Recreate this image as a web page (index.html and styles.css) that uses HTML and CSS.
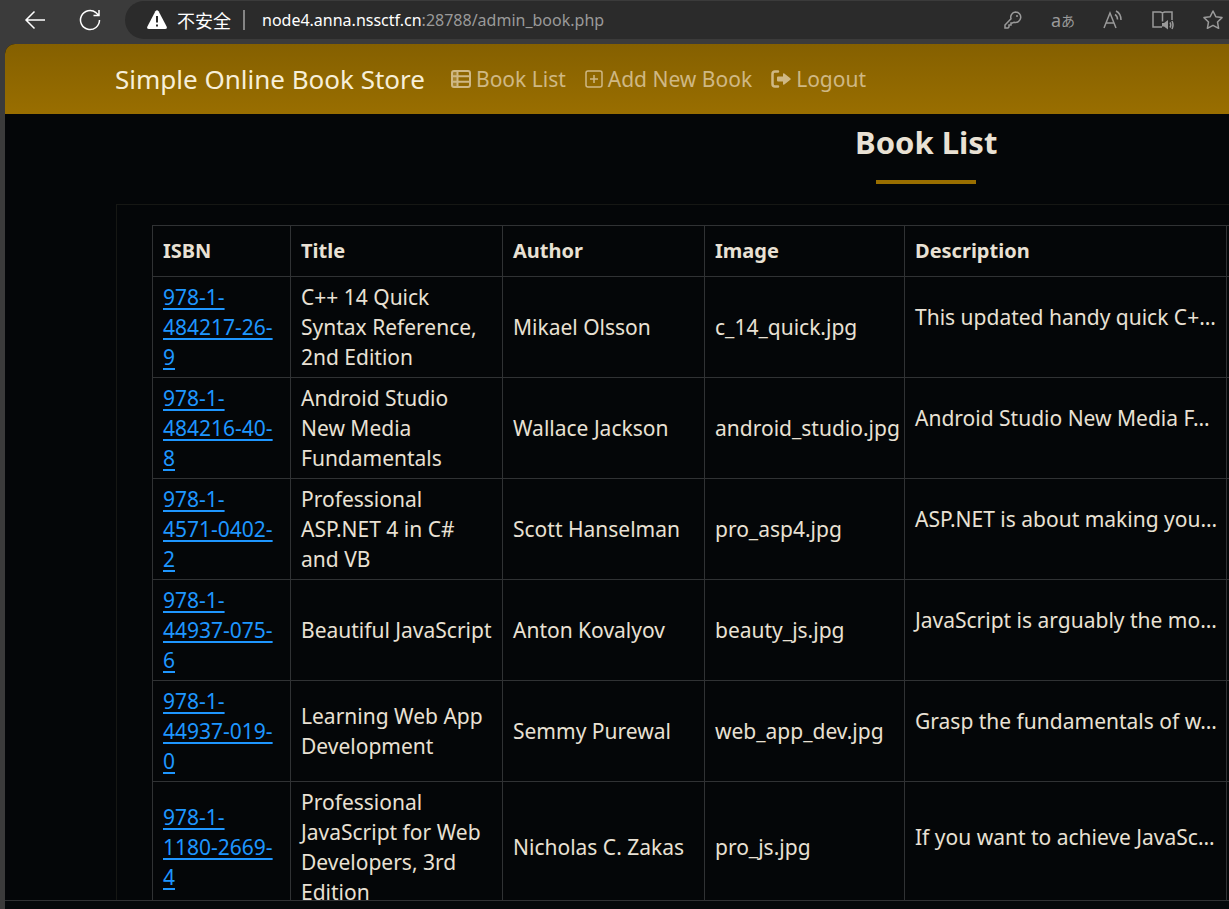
FILE: index.html
```
<!DOCTYPE html>
<html lang="en">
<head>
<meta charset="utf-8">
<title>Book List</title>
<link rel="stylesheet" href="styles.css">
</head>
<body>
<header class="toolbar">
  <button class="tool" aria-label="Back"><svg width="22" height="20" viewBox="0 0 22 20"><path d="M21 10H2M10.500 1.500L2 10l8.500 8.500"/></svg></button>
  <button class="tool" aria-label="Refresh"><svg width="22" height="22" viewBox="0 0 22 22"><path d="M20.500 11a9.500 9.500 0 1 1-3.500-7.300L19.500 6M20 1v5.500h-5.500"/></svg></button>
  <div class="address">
    <svg class="warning" width="22" height="20" viewBox="0 0 22 20"><path d="M9.400 1.200q1.600-2 3.200 0l8 15.300q1 2.500-1.600 2.500H3q-2.600 0-1.600-2.500z" fill="#fff"/><path d="M11 6v6.500M11 14.500v2" stroke="#2b2b2b" stroke-width="2"/></svg>
    <span class="security" lang="zh">不安全</span>
    <span class="divider"></span>
    <span class="url">node4.anna.nssctf.cn<span class="path">:28788/admin_book.php</span></span>
    <div class="actions">
      <button class="action" aria-label="Passwords"><svg width="18" height="18" viewBox="0 0 18 18"><path d="M11.500 1a5.200 5.200 0 1 1-1.400 10.200L8.500 12H7v2H5v2l-1 1H1v-3l6-6.200A5.200 5.200 0 0 1 11.500 1z"/><circle cx="13" cy="5" r="1" fill="#9a9a9a" stroke="none"/></svg></button>
      <button class="action translate" aria-label="Translate">a<span class="kana">あ</span></button>
      <button class="action" aria-label="Read aloud"><svg width="20" height="20" viewBox="0 0 20 20"><path d="M1 18L7 3l6 15M3.200 13h7.600M12 4.500q2.500 1.500 2.500 5M13 1q5 2.500 5 9"/></svg></button>
      <button class="action" aria-label="Immersive reader"><svg width="22" height="20" viewBox="0 0 22 20"><path d="M10 17H1V2h7.500l2 1 2-1H20v8M10.500 3v8.500M18 12.500q1.500 2.500 0 5M20 11q2 4 0 8"/><path d="M10 13h2l4-3v9.500l-4-3h-2z" fill="#9a9a9a" stroke="none"/></svg></button>
      <button class="action" aria-label="Add to favorites"><svg width="20" height="20" viewBox="0 0 20 20"><path d="M10 1l2.800 5.700 6.200.9-4.500 4.400 1.100 6.300L10 15.300l-5.600 3 1.100-6.300L1 7.600l6.200-.9z" stroke-linejoin="round"/></svg></button>
    </div>
  </div>
</header>
<div class="page">
  <nav class="navbar">
    <a class="brand" href="#">Simple Online Book Store</a>
    <a class="nav-link" href="#"><svg width="20" height="18" viewBox="0 0 20 18"><rect x="1" y="1" width="18" height="16" rx="2" class="thick"/><path d="M1 6.300h18M1 11.700h18M6.500 1v16" class="thick"/><path d="M1 2h5v14H1z" fill="currentColor" fill-opacity=".35" stroke="none"/></svg>Book List</a>
    <a class="nav-link" href="#"><svg width="18" height="18" viewBox="0 0 18 18"><rect x="1" y="1" width="16" height="16" rx="2"/><path d="M9 5v8M5 9h8"/></svg>Add New Book</a>
    <a class="nav-link" href="#"><svg width="20" height="18" viewBox="0 0 20 18"><path d="M7 1.500H4Q1.500 1.500 1.500 4v10q0 2.500 2.500 2.500h3" class="bracket"/><path d="M7 6.500h5V4.200q0-1.700 1.300-.6l6 4.600q.9.800 0 1.600l-6 4.600q-1.300 1.100-1.300-.6v-2.300H7q-1 0-1-1v-3q0-1 1-1z" fill="currentColor" stroke="none"/></svg>Logout</a>
  </nav>
  <main class="content">
    <h1 class="heading">Book List</h1>
    <hr class="rule">
    <section class="card">
      <table class="books">
        <colgroup><col class="c-isbn"><col class="c-title"><col class="c-author"><col class="c-image"><col class="c-desc"><col></colgroup>
        <thead><tr><th>ISBN</th><th>Title</th><th>Author</th><th>Image</th><th>Description</th><td></td></tr></thead>
        <tbody>
          <tr><td><a href="#">978-1-<br>484217-26-<br>9</a></td><td>C++ 14 Quick Syntax Reference, 2nd Edition</td><td>Mikael Olsson</td><td>c_14_quick.jpg</td><td><p>This updated handy quick C+…</p></td><td></td></tr>
          <tr><td><a href="#">978-1-<br>484216-40-<br>8</a></td><td>Android Studio New Media Fundamentals</td><td>Wallace Jackson</td><td>android_studio.jpg</td><td><p>Android Studio New Media F…</p></td><td></td></tr>
          <tr><td><a href="#">978-1-<br>4571-0402-<br>2</a></td><td>Professional ASP.NET 4 in C# and VB</td><td>Scott Hanselman</td><td>pro_asp4.jpg</td><td><p>ASP.NET is about making you…</p></td><td></td></tr>
          <tr><td><a href="#">978-1-<br>44937-075-<br>6</a></td><td>Beautiful JavaScript</td><td>Anton Kovalyov</td><td>beauty_js.jpg</td><td><p>JavaScript is arguably the mo…</p></td><td></td></tr>
          <tr><td><a href="#">978-1-<br>44937-019-<br>0</a></td><td>Learning Web App Development</td><td>Semmy Purewal</td><td>web_app_dev.jpg</td><td><p>Grasp the fundamentals of w…</p></td><td></td></tr>
          <tr><td><a href="#">978-1-<br>1180-2669-<br>4</a></td><td>Professional JavaScript for Web Developers, 3rd Edition</td><td>Nicholas C. Zakas</td><td>pro_js.jpg</td><td><p>If you want to achieve JavaSc…</p></td><td></td></tr>
        </tbody>
      </table>
    </section>
  </main>
  <footer class="footer"></footer>
</div>
</body>
</html>
```
FILE: styles.css
```
* { box-sizing: border-box; }
body {
  margin: 0;
  height: 100vh;
  display: flex;
  flex-direction: column;
  overflow: hidden;
  background: #3b3b3b;
  color: #e9e1d4;
  font: 21px/30px "Noto Sans", "Noto Sans CJK SC", sans-serif;
}
svg { flex: none; fill: none; stroke: currentColor; stroke-width: 1.5; }
button { border: 0; padding: 0; background: none; color: inherit; font: inherit; display: flex; align-items: center; justify-content: center; }

.toolbar { display: flex; flex: none; height: 44px; padding: 1px 0 5px 24px; gap: 33px; color: #fff; }
.tool { width: 22px; }
.address {
  flex: 1;
  display: flex;
  align-items: center;
  padding-left: 21px;
  margin-left: -9px;
  border-radius: 19px 0 0 19px;
  background: #2b2b2b;
  font-size: 16px;
  line-height: 24px;
  white-space: nowrap;
}
.warning { stroke: none; }
.security { margin-left: 9px; font-family: "Noto Sans CJK SC", sans-serif; font-size: 18px; }
.divider { width: 2px; height: 20px; margin: 0 17px 0 12px; background: #858585; }
.path { color: #9a9a9a; }
.actions { display: flex; gap: 28px; margin-left: auto; margin-right: 6px; color: #9a9a9a; }
.action { width: 22px; height: 24px; }
.action:last-child { margin-right: -1px; }
.translate { font-size: 18px; }
.kana { font-family: "Noto Sans CJK JP", sans-serif; font-size: 14px; }

.page { flex: 1; min-height: 0; display: flex; flex-direction: column; margin-left: 5px; border-radius: 10px 0 0; overflow: hidden; background: #040608; }
.navbar {
  flex: none;
  display: flex;
  align-items: center;
  height: 70px;
  padding: 0 110px;
  background: linear-gradient(#856000, #996e00);
  white-space: nowrap;
}
.navbar a { text-decoration: none; }
.brand { margin-right: 26px; color: #f7efd8; font-size: 26px; }
.nav-link { display: flex; align-items: center; gap: 5px; margin-right: 19px; color: #cfb884; }
.thick { stroke-width: 2; }
.bracket { stroke-width: 2.500; stroke-linecap: round; }

.content { flex: 1; min-height: 0; width: 150vw; overflow: hidden; padding: 8px 112px 0 111px; }
.heading { margin: 0; font-size: 31px; line-height: 40px; text-align: center; }
.rule { width: 100px; height: 4px; margin: 18px auto 20px; border: 0; background: #996e00; }
.card { border: 1px solid #161714; padding: 20px 35px; }
.books { width: 100%; table-layout: fixed; border-collapse: collapse; }
.c-isbn { width: 138px; }
.c-title { width: 212px; }
.c-author { width: 202px; }
.c-image { width: 200px; }
.c-desc { width: 322px; }
.books th, .books td { padding: 5px 8px 5px 10px; border: 1px solid #303234; text-align: left; vertical-align: middle; }
.books th { padding: 10px; font-size: 20px; }
.books a { color: #1e96ff; text-underline-offset: 3px; text-decoration-thickness: 2px; }
.books p { margin: 0 0 20px; white-space: nowrap; }
.footer { flex: none; height: 9px; border-top: 1px solid #303234; background: #05090b; }
```
